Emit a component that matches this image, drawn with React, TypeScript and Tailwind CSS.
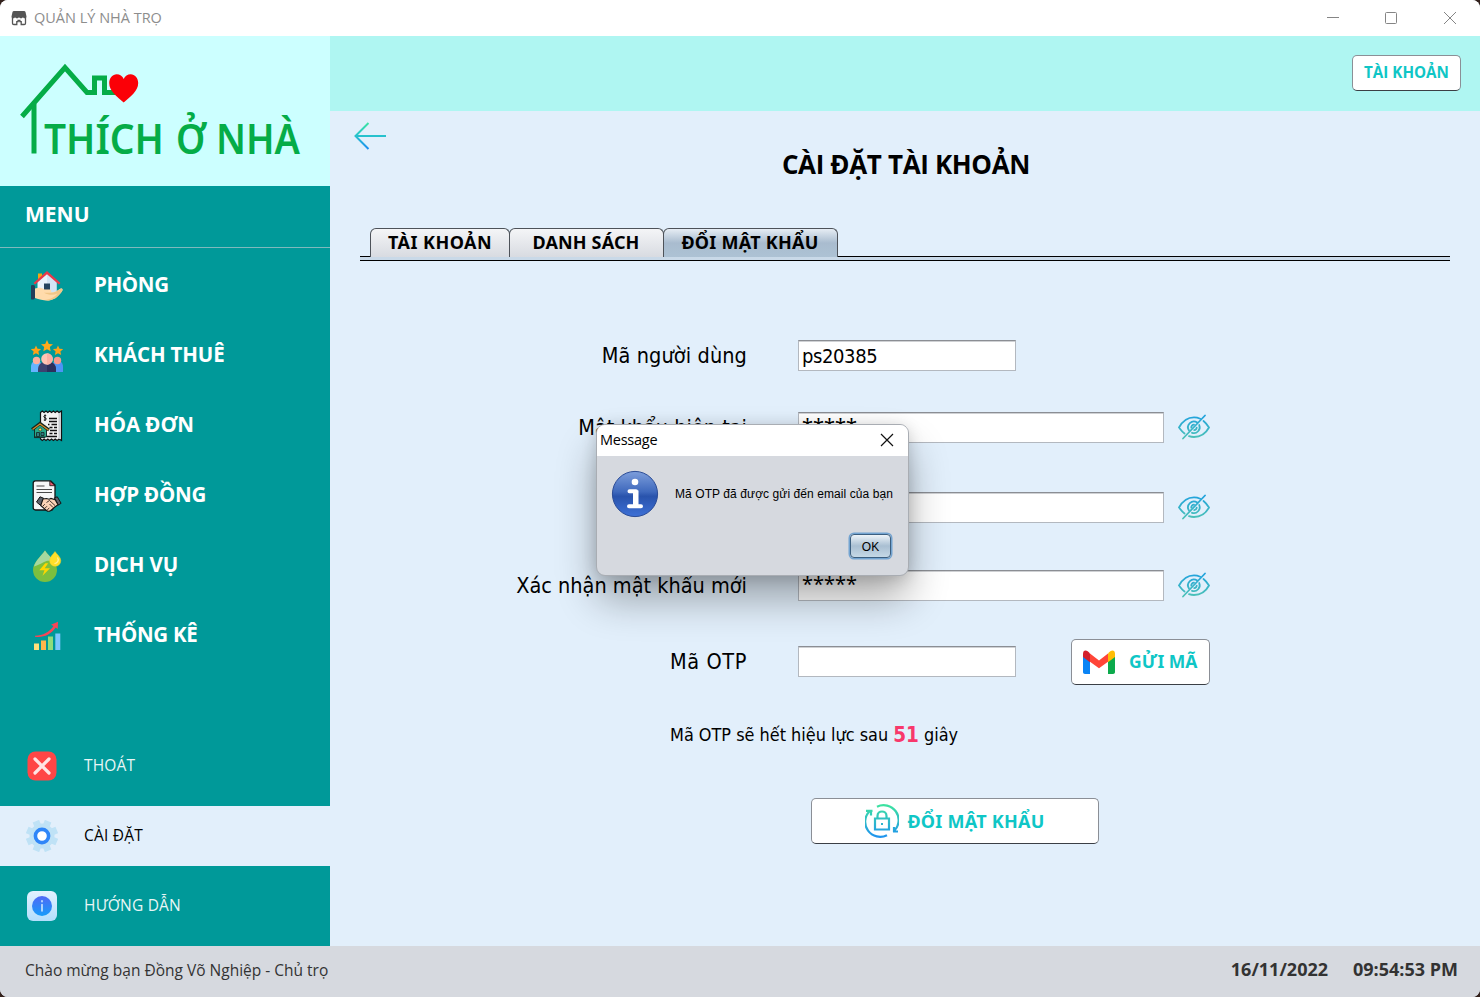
import React from 'react';

const SEGOE = "font-['Open_Sans',sans-serif]";
const TAHOMA = "font-['DejaVu_Sans_Condensed','Noto_Sans',sans-serif]";
const TAHOMA_BOLD = "font-['Noto_Sans',sans-serif] font-bold";

function AppIcon() {
  return (
    <svg width="16" height="16" viewBox="0 0 16 16" fill="none">
      <path d="M1.500 7v6.200c0 .8.5 1.300 1.300 1.300h3v-2.800h1.300V10.500h1.800v1.200h1.300v2.800h3c.8 0 1.300-.5 1.300-1.300V7" stroke="#555" strokeWidth="1.300" />
      <path d="M3 1h10c.8 0 1.300.3 1.500 1l1 4.500c0 1.100-.8 1.700-1.700 1.700S12 7.600 12 6.900C11.800 7.700 11 8.200 10 8.200S8.200 7.700 8 6.900c-.2.8-1 1.300-2 1.300s-1.800-.5-2-1.300c0 .7-.9 1.300-1.800 1.300S.5 7.600.5 6.500L1.500 2c.2-.7.7-1 1.500-1Z" fill="#555" />
    </svg>
  );
}

function Logo() {
  return (
    <svg width="330" height="150" viewBox="0 0 330 150">
      <path d="M22 80.500 65 31.500l22 25h7.500V42h10v14.500H116" fill="none" stroke="#05ac47" strokeWidth="5" />
      <path d="M34 68v49.500" stroke="#05ac47" strokeWidth="5" />
      <path d="M123.700 66.500c-7-6-14.500-11.500-14.500-19.500 0-5 3.500-8.800 7.500-8.800 3 0 5.800 2 7 4.700 1.200-2.700 4-4.700 7-4.700 4 0 7.500 3.800 7.500 8.800 0 8-7.500 13.500-14.500 19.500Z" fill="#fb0007" />
      <text x="44" y="117.500" textLength="120" lengthAdjust="spacingAndGlyphs" fill="#05ac47" className="font-['Noto_Sans',sans-serif] text-[42px] font-semibold">THÍCH</text>
      <text x="176" y="117.500" textLength="30" lengthAdjust="spacingAndGlyphs" fill="#05ac47" className="font-['Noto_Sans',sans-serif] text-[42px] font-semibold">Ở</text>
      <text x="216" y="117.500" textLength="84" lengthAdjust="spacingAndGlyphs" fill="#05ac47" className="font-['Noto_Sans',sans-serif] text-[42px] font-semibold">NHÀ</text>
    </svg>
  );
}

function RoomIcon() {
  return (
    <svg width="32" height="32" viewBox="0 0 32 32">
      <path d="M7 3.500h4V9H7z" fill="#f3a712" />
      <path d="M6.500 11 16 3l9.500 8v12h-19z" fill="#e9f3fb" />
      <path d="M16 3l9.500 8v12H16z" fill="#d3e4f4" />
      <path d="M2.500 13 16 1l13.500 12-1.600 1.600L16 4.300 4.100 14.600z" fill="#e8394a" />
      <path d="M13 13.500h6V21h-6z" fill="#24445f" />
      <path d="M4 18.500c4-1.200 7-.8 9.500 1h5c2 0 2.500 2.200.5 2.800 3.500.2 7-1 9.500-3.100 1.700-1.400 3.800-.3 2.800 1.600C28.500 25.500 24 29.500 19 30.300c-5 .8-10-.8-15-2.300z" fill="#ffdbab" />
      <path d="M13 22.700h6c4 .3 7-1.700 9.500-3.500 1.700-1.400 3.800-.3 2.800 1.600C28.500 25.500 24 29.500 19 30.300c-2 .3-4 .2-6-.200 6-.4 11-3 13.500-6.500-4 2-9 1.500-13.500-.9Z" fill="#f1c687" />
      <path d="M0 15.500c2-.7 3.500-.5 4 .500v12c-.5 1.500-2 1.700-4 1.300z" fill="#243f59" />
    </svg>
  );
}

const STAR = 'M0-6 1.800-2.100 6-1.700 2.800 1.100 3.700 5.300 0 3.200-3.700 5.300-2.800 1.100-6-1.700-1.800-2.100Z';

function TenantsIcon() {
  return (
    <svg width="32" height="32" viewBox="0 0 32 32">
      <path d={STAR} transform="translate(16 6)" fill="#ffa91a" />
      <path d={STAR} transform="translate(5 10.500) scale(.85)" fill="#ffa216" />
      <path d={STAR} transform="translate(27 10.500) scale(.85)" fill="#ffa216" />
      <path d="M0 32v-5c0-4 2-6 5.500-6S11 23 11 27v5z" fill="#66b4ff" />
      <path d="M21 32v-5c0-4 2-6 5.500-6S32 23 32 27v5z" fill="#4d94f5" />
      <circle cx="5.500" cy="20.500" r="3.700" fill="#ffb09e" />
      <circle cx="26.500" cy="20.500" r="3.700" fill="#f79a8c" />
      <path d="M7 32v-2c0-5.500 3-8.500 9-8.500s9 3 9 8.500v2z" fill="#3d4270" />
      <path d="M16 21.500c6 0 9 3 9 8.500v2h-9z" fill="#2c305c" />
      <circle cx="16" cy="19" r="5.800" fill="#ffc4b4" />
      <path d="M16 13.200a5.800 5.800 0 0 1 0 11.600z" fill="#fbb0a3" />
    </svg>
  );
}

function InvoiceIcon() {
  return (
    <svg width="32" height="32" viewBox="0 0 32 32">
      <path d="M9.500 2.500 11.300 1l1.800 1.500L15 1l1.800 1.500L18.700 1l1.800 1.500L22.400 1l1.800 1.500L26.100 1 28 2.500 30.500 1v29.500l-2.500-1.500-1.900 1.500-1.900-1.500-1.800 1.500-1.900-1.500-1.800 1.500-1.900-1.500-1.800 1.500-1.900-1.500-1.800 1.500-1.800-1.500z" fill="#f2f2f2" stroke="#111" strokeWidth="1.200" />
      <path d="M27.500 3h2.300v26h-2.300z" fill="#c9cdd1" />
      <path d="M15.200 5.500c-2.500-.8-3.200 1.800-1.200 2.200 2.200.5 1.400 3-1.200 2.300M14 4.500v6.500" fill="none" stroke="#111" />
      <path d="M18 8.500h8M18 11.500h8M17 14.500h1.500m2 0H26M18.500 17.500h3m1.500 0h3M19 20.500h7M18.500 23.500h3m1.500 0h3M16 26.500h10" stroke="#111" strokeWidth="1.300" />
      <path d="M3.500 19 9 14l6.500 5.500V27h-12z" fill="#26a889" stroke="#12302c" />
      <path d="m1 19.500 8-6 9 6.500" fill="none" stroke="#18251c" strokeWidth="3.200" />
      <path d="m1.500 19.500 7.500-5.500 8.500 6" fill="none" stroke="#d58b2c" strokeWidth="1.300" />
      <circle cx="9.200" cy="19.500" r="1.500" fill="#f6de59" stroke="#173c37" strokeWidth=".7" />
      <path d="M5.500 22.500h3v4h-3zM10 22.500h3v3h-3z" fill="#327d82" stroke="#15302e" strokeWidth=".9" />
      <path d="M3 27.500h11" stroke="#15302e" strokeWidth="1.200" />
    </svg>
  );
}

function ContractIcon() {
  return (
    <svg width="32" height="32" viewBox="0 0 32 32">
      <path d="M4.500.800h15.200L24 5v18.500c0 2-1 4-3 6.500H4.500c-1.500 0-2.300-.8-2.300-2.300V3.100C2.200 1.600 3 .8 4.500.8Z" fill="#f7f7f7" stroke="#151515" strokeWidth="1.300" />
      <path d="M18.800 1v4.700H24z" fill="#e4576b" stroke="#151515" strokeWidth=".8" />
      <path d="M5.500 6h8M5.500 9.500h15.500M5.500 12.500h15.500" stroke="#4a4a4a" strokeWidth="1.200" />
      <path d="M5.500 22 9 16.800l3.700 1.500-3 7.200zM23.500 17.800l2.800-1 3.800 6.500-2.800 1.700z" fill="#5d626b" stroke="#151515" />
      <path d="m12 19 3.500-.5 2.500.7 2-.8 4 1.200 3 5.200-3.500 2.500-3.700 3.200c-1.500 1-3 1-4.300 0l-5.800-5z" fill="#fbd3b7" stroke="#151515" strokeWidth="1.100" />
      <path d="m15.500 22.500 3-2 5.500 5M12 26l1.800-1.800M14 28.200l2-2M16.300 30l2-2.200M18.500 24l3.500 3.500" fill="none" stroke="#302420" strokeWidth=".9" />
    </svg>
  );
}

function ServiceIcon() {
  return (
    <svg width="32" height="32" viewBox="0 0 32 32">
      <path d="M14 .5c4.500 6.500 12 12 12 19.500a12 12 0 0 1-24 0C2 12.500 9.500 7 14 .5Z" fill="#7cbf3e" />
      <path d="M14 .5c2 3.500 5.500 6 8.500 10-2 1-5.500-1-9.500 1.500-4.500 2.500-8.500 4-10 4.500C4.500 10.500 10.500 5.500 14 .5Z" fill="#a5d89f" />
      <path d="m14.300 13.300-6 7h5.200l-2 5.500 7.500-7.600h-5.300l3.500-4.900z" fill="#fdd700" />
      <path d="M24 1.500c2 3 5.800 5.500 5.800 9.200a5.600 5.600 0 0 1-11.200 0c0-3.700 3.500-6.200 5.400-9.200Z" fill="#ffdf29" stroke="#e4cf24" strokeWidth=".5" />
      <path d="M26.500 7.500c2 3-.5 6-3 6" fill="none" stroke="#fff1a0" strokeWidth="1.200" />
    </svg>
  );
}

function StatsIcon() {
  return (
    <svg width="32" height="32" viewBox="0 0 32 32">
      <path d="M3 23.500h5v6.500H3z" fill="#ffe07a" />
      <path d="M10 20.500h5V30h-5z" fill="#ffb64c" />
      <path d="M17 16.500h5V30h-5z" fill="#8fdc7c" />
      <path d="M24.300 13.500h5V30h-5z" fill="#7cc5ff" />
      <path d="M4 15.800C12 15.500 18.500 12 22.500 6l-2.500-1.200 7-3-.3 7.200-2-1.500c-5 7.500-12.700 10.200-20.700 9.200Z" fill="#fb4455" />
    </svg>
  );
}

function ExitIcon() {
  return (
    <svg width="32" height="32" viewBox="0 0 32 32">
      <rect x="1.500" y="1.500" width="29" height="29" rx="8" fill="#ff4646" />
      <path d="m9 9 14 14M23 9 9 23" stroke="#ffe3e3" strokeWidth="3.200" strokeLinecap="round" />
    </svg>
  );
}

function GearIcon() {
  return (
    <svg width="32" height="32" viewBox="0 0 32 32">
      <circle cx="16" cy="16" r="12.500" fill="#bfe2f6" />
      <path d="M16 0v32M0 16h32" stroke="#bfe2f6" strokeWidth="7" transform="rotate(22.500 16 16)" />
      <path d="M16 0v32M0 16h32" stroke="#bfe2f6" strokeWidth="7" transform="rotate(67.500 16 16)" />
      <circle cx="16" cy="16" r="6.600" fill="#fff" stroke="#2f86f8" strokeWidth="3.600" />
    </svg>
  );
}

function GuideIcon() {
  return (
    <svg width="32" height="32" viewBox="0 0 32 32">
      <defs>
        <linearGradient id="guideBox" x1="0" y1="0" x2="0" y2="1"><stop stopColor="#e2f2ff" /><stop offset="1" stopColor="#b3defc" /></linearGradient>
        <linearGradient id="guideDot" x1="0" y1="0" x2="0" y2="1"><stop stopColor="#5069f5" /><stop offset="1" stopColor="#159cfa" /></linearGradient>
      </defs>
      <rect x="1" y="1" width="30" height="30" rx="6" fill="url(#guideBox)" />
      <circle cx="16" cy="16" r="10" fill="url(#guideDot)" />
      <path d="M16 14.500V21M16 10.700v1" stroke="#d6ecff" strokeWidth="1.500" strokeLinecap="round" />
    </svg>
  );
}

function EyeOffIcon() {
  return (
    <svg width="32" height="26" viewBox="0 0 32 26" fill="none" className="mb-[2px] ml-[14px] shrink-0">
      <defs>
        <linearGradient id="eyeTone" x1="0" y1="0" x2="0" y2="26" gradientUnits="userSpaceOnUse"><stop stopColor="#1ea0e0" /><stop offset="1" stopColor="#4fc4b4" /></linearGradient>
      </defs>
      <g stroke="url(#eyeTone)" strokeWidth="1.800" strokeLinecap="round">
        <path d="M27 1.500 5 24.500" />
        <path d="M6.500 19.500C4 17.700 2.200 15 1 13.500 4 8 9.500 3.300 16 3.300c2.300 0 4.300.500 6.200 1.400" />
        <path d="M25.500 7C28 9 29.800 11.500 31 13.500c-3 5.500-8.500 9.500-15 9.500-1.900 0-3.500-.3-5-.8" />
        <path d="M11 16.500a5.800 5.800 0 0 1 8.200-7.900M21.200 11a5.800 5.800 0 0 1-7.200 7.800" />
        <path d="M16 10.600a2.800 2.800 0 0 0-2.700 3M18.700 13.600a2.800 2.800 0 0 1-2.500 2.500" />
      </g>
    </svg>
  );
}

function GmailIcon() {
  return (
    <svg width="32" height="24" viewBox="0 0 32 24">
      <path d="M0 4h7v20H2c-1.200 0-2-.8-2-2z" fill="#0a84f5" />
      <path d="M25 4h7v18c0 1.200-.8 2-2 2h-5z" fill="#0caa4c" />
      <path d="m7 3.500 9 7 9-7v8.300l-9 6.500-9-6.500z" fill="#ff4538" />
      <path d="M25 3.500C28-.5 32-.5 32 4v3l-7 5.300z" fill="#ffbd04" />
      <path d="M7 3.500C4-.5 0-.5 0 4v3l7 5.300z" fill="#d3202c" />
    </svg>
  );
}

function LockCycleIcon() {
  return (
    <svg width="34" height="34" viewBox="0 0 34 34" fill="none">
      <defs>
        <linearGradient id="lockTone" x1="0" y1="1" x2="0" y2="33" gradientUnits="userSpaceOnUse"><stop stopColor="#3ee3a0" /><stop offset="1" stopColor="#1e93ef" /></linearGradient>
      </defs>
      <g stroke="url(#lockTone)" strokeWidth="2.200">
        <path d="M12 2.700A15 15 0 0 1 29.500 26.500M33 27.500h-5M29 28v-5" />
        <path d="M22 31.200A15 15 0 0 1 4.500 7.300M1 6.800h6.500M6 6.500v5" />
        <path d="M10 14.500h14v11H10zM12.500 14.500V12c0-6 9-6 9 0v2.500" />
        <path d="M16 20h2" />
      </g>
    </svg>
  );
}

function InfoIcon() {
  return (
    <svg width="48" height="48" viewBox="0 0 48 48">
      <defs>
        <linearGradient id="infoTone" x1="0" y1="0" x2="0" y2="1">
          <stop stopColor="#7d9edb" /><stop offset=".45" stopColor="#3f69bd" /><stop offset=".55" stopColor="#2953ac" /><stop offset="1" stopColor="#3d70d6" />
        </linearGradient>
      </defs>
      <circle cx="24" cy="24" r="22.600" fill="url(#infoTone)" stroke="#2b4c96" strokeWidth="1" />
      <circle cx="24" cy="12" r="3.300" fill="#fff" />
      <path d="M18.500 21.200h6.500v15M18 36.200h12" fill="none" stroke="#fff" strokeWidth="4" strokeLinecap="round" strokeLinejoin="round" />
      <path d="M22 20.500h5.500v15H22z" fill="#fff" />
    </svg>
  );
}

const menu = [
  { label: 'PHÒNG', icon: <RoomIcon />, track: 'tracking-[-0.35px]' },
  { label: 'KHÁCH THUÊ', icon: <TenantsIcon />, track: 'tracking-[-0.15px]' },
  { label: 'HÓA ĐƠN', icon: <InvoiceIcon />, track: 'tracking-[-0.05px]' },
  { label: 'HỢP ĐỒNG', icon: <ContractIcon />, track: 'tracking-[-0.2px]' },
  { label: 'DỊCH VỤ', icon: <ServiceIcon />, track: 'tracking-[-0.1px]' },
  { label: 'THỐNG KÊ', icon: <StatsIcon />, track: 'tracking-[-0.3px]' },
];

const footerMenu = [
  { label: 'THOÁT', icon: <ExitIcon />, tone: 'text-[#e9f6f6]' },
  { label: 'CÀI ĐẶT', icon: <GearIcon />, tone: 'bg-[#e2effb] text-black' },
  { label: 'HƯỚNG DẪN', icon: <GuideIcon />, tone: 'text-[#e9f6f6]' },
];

function Sidebar() {
  return (
    <aside className={`flex w-[330px] shrink-0 flex-col bg-[#009999] ${SEGOE}`}>
      <div className="h-[150px] bg-[#ccffff]"><Logo /></div>
      <div className="flex h-[62px] items-center border-b border-[#7fb9bd] pb-[4px] pl-[25px] text-[21px] font-bold text-white">MENU</div>
      <nav className="flex flex-col pt-px">
        {menu.map((m) => (
          <div key={m.label} className="flex h-[70px] items-center pl-[31px]">
            <div className="mt-[3px] w-[63px]">{m.icon}</div>
            <span className={`text-[20.5px] font-bold text-white ${m.track}`}>{m.label}</span>
          </div>
        ))}
      </nav>
      <nav className="mt-auto flex flex-col gap-[10px] pb-[10px]">
        {footerMenu.map((m) => (
          <div key={m.label} className={`flex h-[60px] items-center pl-[26px] ${m.tone}`}>
            <div className="w-[58px]">{m.icon}</div>
            <span className="text-[15.5px] tracking-[0.2px]">{m.label}</span>
          </div>
        ))}
      </nav>
    </aside>
  );
}

const BUTTON = 'flex items-center rounded-[5px] border border-[#8b8f96] border-b-[#3b3f45] bg-white text-[#0fc6c6]';

function Field({ label, value = '', wide = false, gap, track = 'tracking-normal', children }: { label?: string; value?: string; wide?: boolean; gap: string; track?: string; children?: React.ReactNode }) {
  return (
    <div className={`flex h-[31px] items-center ${gap}`}>
      <div className={`w-[417px] shrink-0 whitespace-nowrap pt-[2px] text-right text-[21.5px] ${track}`}>{label}</div>
      <div className={`ml-[51px] flex h-[31px] shrink-0 items-center border border-[#b3b8bf] border-t-[#8b8e94] bg-white pl-[3px] text-[20px] tracking-[-0.4px] shadow-[inset_0_1px_0_#cfd1d4] ${wide ? 'w-[366px]' : 'w-[218px]'}`}>
        {value.startsWith('*') ? <span className="pb-[3px] font-['Noto_Sans',sans-serif] tracking-[0px]">{value}</span> : value}
      </div>
      {children}
    </div>
  );
}

function Tabs() {
  const base = 'flex h-[29px] items-center justify-center rounded-t-[6px] border border-b-0 border-[#4d5259] bg-linear-to-b pb-px';
  return (
    <div className={`mx-[30px] mt-[46px] h-[33px] text-[18px] text-black ${TAHOMA_BOLD}`}>
      <div className="flex h-[28px] pl-[10px]">
        <div className={`${base} w-[140px] from-[#f4f5f7] to-[#d8dbe1] tracking-[0.45px]`}>TÀI KHOẢN</div>
        <div className={`${base} -ml-px w-[155px] from-[#f4f5f7] to-[#d8dbe1] pr-px tracking-[0.15px]`}>DANH SÁCH</div>
        <div className={`${base} -ml-px w-[175px] from-[#e6edf4] via-[#a9bccf] to-[#adc2d4] pr-px tracking-[0.25px]`}>ĐỔI MẬT KHẨU</div>
      </div>
      <div className="h-[5px] border-y border-black bg-[#c9d9e8]" />
    </div>
  );
}

function Message() {
  return (
    <div className="absolute left-[596px] top-[424px] flex h-[152px] w-[313px] flex-col overflow-hidden rounded-[9px] border border-[#a9adb3] bg-[#d6d9df] text-black">
      <div className="flex h-[31px] shrink-0 items-center justify-between bg-white pb-px pl-[3px] pr-[14px]">
        <span className={`text-[14.500px] tracking-[-0.25px] ${SEGOE}`}>Message</span>
        <svg width="14" height="14" viewBox="0 0 14 14"><path d="m1 1 12 12M13 1 1 13" stroke="#111" strokeWidth="1.200" /></svg>
      </div>
      <div className="flex h-[75px] items-center pl-[14px]">
        <InfoIcon />
        <span className="ml-[16px] whitespace-nowrap font-['Liberation_Sans',sans-serif] text-[12px] tracking-[0.08px]">Mã OTP đã được gửi đến email của bạn</span>
      </div>
      <div className="flex justify-end pr-[17px] pt-[3px]">
        <button className="flex h-[24px] w-[41px] items-center justify-center rounded-[4px] border border-[#3c5f80] bg-linear-to-b from-[#eef4f9] via-[#a9bfd2] to-[#c5d8e6] pt-px font-['Liberation_Sans',sans-serif] text-[12px] shadow-[0_0_0_1.500px_#73a4d1]">OK</button>
      </div>
    </div>
  );
}

export default function App() {
  return (
    <div className="h-[997px] w-[1480px] overflow-hidden bg-[#33211c]">
      <div className="relative flex h-[997px] w-[1480px] flex-col overflow-hidden rounded-[8px] bg-[#e2effb]">
        <header className={`flex h-[36px] shrink-0 items-center bg-white pb-px pl-[11px] text-[#8d8d8d] ${SEGOE}`}>
          <AppIcon />
          <span className="ml-[7px] text-[14.500px]">QUẢN LÝ NHÀ TRỌ</span>
          <svg className="ml-auto mr-[22px]" width="132" height="14" viewBox="0 0 132 14" fill="none" stroke="#858585">
            <path d="M1 6.500h12" />
            <rect x="59.500" y="1.500" width="11" height="11" rx="1" />
            <path d="m118 1 12 12M130 1l-12 12" />
          </svg>
        </header>
        <div className="flex min-h-0 flex-1">
          <Sidebar />
          <main className="flex min-w-0 flex-1 flex-col">
            <div className="flex h-[75px] shrink-0 items-center justify-end bg-[#aff6f2] pb-[2px] pr-[19px]">
              <button className={`${BUTTON} h-[36px] w-[109px] justify-center pb-px text-[15.200px] font-bold ${SEGOE}`}>TÀI KHOẢN</button>
            </div>
            <div className="pl-[24px] pt-[10px]">
              <svg width="33" height="29" viewBox="0 0 33 29" fill="none">
                <defs>
                  <linearGradient id="backTone" x1="0" y1="1" x2="0" y2="28" gradientUnits="userSpaceOnUse"><stop stopColor="#3fe6a0" /><stop offset=".5" stopColor="#27c3cc" /><stop offset="1" stopColor="#1b8df2" /></linearGradient>
                </defs>
                <path d="M14.500 2 1.500 15l13 13M2 15h30" stroke="url(#backTone)" strokeWidth="2" />
              </svg>
            </div>
            <h1 className={`-mt-[4px] pl-[2px] text-center text-[26px] font-bold leading-[36px] tracking-[-0.35px] text-black ${SEGOE}`}>CÀI ĐẶT TÀI KHOẢN</h1>
            <Tabs />
            <section className={`flex flex-col text-black ${TAHOMA}`}>
              <Field label="Mã người dùng" value="ps20385" gap="mt-[79px]" track="tracking-[0.1px]" />
              <Field label="Mật khẩu hiện tại" value="*****" wide gap="mt-[41px]"><EyeOffIcon /></Field>
              <Field wide gap="mt-[49px]"><EyeOffIcon /></Field>
              <Field label="Xác nhận mật khẩu mới" value="*****" wide gap="mt-[47px]"><EyeOffIcon /></Field>
              <Field label="Mã OTP" gap="mt-[45px]" track="tracking-[0.6px]">
                <button className={`${BUTTON} ml-[55px] h-[46px] w-[139px] shrink-0 gap-[14px] pl-[11px] text-[17.500px] ${TAHOMA_BOLD}`}>
                  <GmailIcon />
                  GỬI MÃ
                </button>
              </Field>
              <p className="mt-[44px] flex h-[28px] items-center whitespace-pre pl-[340px] text-[17.900px]">Mã OTP sẽ hết hiệu lực sau <span className="font-['DejaVu_Sans_Condensed',sans-serif] text-[20.500px] font-bold text-[#f8386b]">51</span> giây</p>
              <button className={`${BUTTON} ml-[481px] mt-[49px] h-[46px] w-[288px] justify-center gap-[8px] text-[18px] tracking-[0.25px] ${TAHOMA_BOLD}`}>
                <LockCycleIcon />
                ĐỔI MẬT KHẨU
              </button>
            </section>
          </main>
        </div>
        <footer className={`flex h-[51px] shrink-0 items-center bg-[#d6d9df] pb-[2px] pl-[25px] pr-[22px] text-[#333] ${SEGOE}`}>
          <span className="text-[15.500px]">Chào mừng bạn Đồng Võ Nghiệp - Chủ trọ</span>
          <span className="ml-auto pb-[3px] text-[18px] font-bold">16/11/2022</span>
          <span className="ml-[25px] pb-[3px] text-[18px] font-bold">09:54:53 PM</span>
        </footer>
        <div className="absolute left-[597px] top-[425px] h-[150px] w-[311px] rounded-[9px] shadow-[0_24px_40px_rgba(0,0,0,0.32),0_2px_16px_rgba(0,0,0,0.18)]" />
        <Message />
      </div>
    </div>
  );
}
